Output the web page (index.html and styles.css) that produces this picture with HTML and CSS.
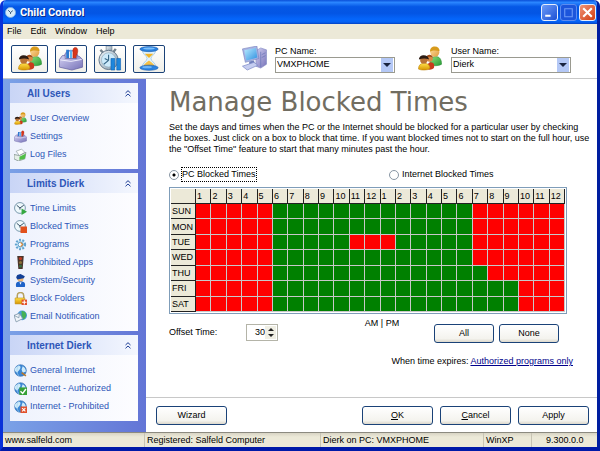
FILE: index.html
```html
<!DOCTYPE html>
<html lang="en">
<head>
    <meta charset="UTF-8">
    <meta name="viewport" content="width=device-width, initial-scale=1.0">
    <title>Child Control</title>
    <link rel="stylesheet" href="styles.css">
</head>
<body>
<!-- shared icons -->
<svg class="defs" aria-hidden="true">
    <defs>
        <linearGradient id="gGreen" x1="0" y1="0" x2="1" y2="1"><stop offset="0" stop-color="#8fe07c"/><stop offset="1" stop-color="#259a35"/></linearGradient>
        <linearGradient id="gYellow" x1="0" y1="0" x2="0" y2="1"><stop offset="0" stop-color="#ffe14a"/><stop offset="1" stop-color="#d79400"/></linearGradient>
        <linearGradient id="gFace" x1="0" y1="0" x2="1" y2="1"><stop offset="0" stop-color="#ffe0a0"/><stop offset="1" stop-color="#e09a3c"/></linearGradient>
        <linearGradient id="gBox" x1="0" y1="0" x2="1" y2="1"><stop offset="0" stop-color="#d3d0f2"/><stop offset="1" stop-color="#7672b8"/></linearGradient>
        <linearGradient id="gBlue" x1="0" y1="0" x2="1" y2="1"><stop offset="0" stop-color="#b9ecff"/><stop offset="1" stop-color="#2e8fe0"/></linearGradient>
        <linearGradient id="gSteel" x1="0" y1="0" x2="1" y2="1"><stop offset="0" stop-color="#f4f8fb"/><stop offset="1" stop-color="#8297a8"/></linearGradient>
    </defs>
    <symbol id="users" viewBox="0 0 26 26">
        <path d="M13 19c0-6 2-8 6-8s6 3 6 8c-3 2-9 2-12 0z" fill="url(#gGreen)" stroke="#268a30" stroke-width=".6"/>
        <circle cx="18" cy="6.500" r="4.700" fill="url(#gFace)"/>
        <path d="M13 6c0-4 2-5.500 5-5.500s5 2 5 5c-3-1-7-1.500-10 .5z" fill="#d89b1c"/>
        <path d="M10 24c0-4 1-7 4-7s4 3 3 6c-2 2-5 2-7 1z" fill="#c83a1c"/>
        <circle cx="12.500" cy="13" r="3.400" fill="#d98a44"/>
        <path d="M9 12c1-4 6-4 7 0-2-1-5-1-7 0z" fill="#a04c18"/>
        <path d="M1 24c0-4 2-6 6-6s6 2 6 5.500c-3 2-9 2-12 .5z" fill="url(#gYellow)" stroke="#b87c00" stroke-width=".5"/>
        <circle cx="6.500" cy="14.500" r="3.800" fill="#b97236"/>
        <path d="M1.500 14c0-6 10-6 10.500 0-3-1.500-7-1.500-10.500 0z" fill="#2c1c14"/>
    </symbol>
    <symbol id="toolbox" viewBox="0 0 26 26">
        <path d="M6 13c0-11 14-11 14 0" fill="none" stroke="#8f8bc6" stroke-width="1.500"/>
        <path d="M8 13V4h3v9z" fill="#2a78d0"/>
        <path d="M12 13V4l2 1v8z" fill="#58b0f0"/>
        <path d="M15 14V6c-1-6 6-6 5 0l-2 8z" fill="#d8361c" stroke="#9c200c" stroke-width=".5"/>
        <path d="M1 14l3-4h3v3h12v-3l3 1 3 3v8l-11 3-13-3z" fill="url(#gBox)" stroke="#6a66a4" stroke-width=".8"/>
        <path d="M2 14.500l11 1.500 11-2" fill="none" stroke="#eeedfc"/>
    </symbol>
    <symbol id="stopwatch" viewBox="0 0 26 26">
        <path d="M9 0h6v5H9z" fill="url(#gSteel)" stroke="#6f7f8c" stroke-width=".7"/>
        <path d="M3 4l3 3M19 3l-3 4" stroke="#75838e" stroke-width="2.500"/>
        <circle cx="11.500" cy="14.500" r="10" fill="url(#gSteel)" stroke="#62778a"/>
        <circle cx="11.500" cy="14.500" r="7.400" fill="#cdeafa" stroke="#8aa7ba" stroke-width=".6"/>
        <path d="M11.500 15V9M11.500 15l-4-2M11.500 15l-5 4" stroke="#386888" stroke-width="1.200"/>
        <path d="M14 13h4v12h-4zM20 13h4v12h-4z" fill="#1d86dc" stroke="#0d5cae" stroke-width=".6"/>
    </symbol>
    <symbol id="hourglass" viewBox="0 0 26 26">
        <path d="M6 4h14c0 5-5 6-5 9s5 4 5 9H6c0-5 5-6 5-9s-5-4-5-9z" fill="#e0f3ff" stroke="#9cc4e4" stroke-width=".8"/>
        <path d="M8.500 8h9L13 12.500z" fill="#f0b428"/>
        <path d="M13 15c4 3 5.500 4 6 7H7c.5-3 2-4 6-7z" fill="#f6c044"/>
        <ellipse cx="13" cy="3.200" rx="9.500" ry="2.700" fill="#2a82e0" stroke="#1458ac" stroke-width=".6"/>
        <ellipse cx="13" cy="2.600" rx="6" ry="1.100" fill="#7cc0fa"/>
        <ellipse cx="13" cy="22.600" rx="9.500" ry="2.700" fill="#2a82e0" stroke="#1458ac" stroke-width=".6"/>
        <ellipse cx="11" cy="22" rx="5" ry="1.100" fill="#6cb4f6"/>
    </symbol>
    <symbol id="computer" viewBox="0 0 26 26">
        <path d="M15 5l5-3 6 2v15l-6 4-5-2z" fill="url(#gBox)" stroke="#7c86c0" stroke-width=".6"/>
        <path d="M20 6v16M21 9l4-2M21 12l4-2" stroke="#6d78b8" stroke-width=".8"/>
        <path d="M1 3l15-3 2 13-14 4z" fill="#a7b3e4" stroke="#6f7cba" stroke-width=".6"/>
        <path d="M3 4.500l12-2.500 1.500 10L5 15z" fill="url(#gBlue)"/>
        <path d="M8 16l5-1 1 4-6 1z" fill="#7080bc"/>
        <path d="M1 21l12-4 4 3-11 5z" fill="#c5cdf0" stroke="#7885c4" stroke-width=".7"/>
    </symbol>
    <symbol id="log" viewBox="0 0 12 12">
        <path d="M2 3l5-2 3 3-5 3z" fill="#fff" stroke="#8a9a9a" stroke-width=".6"/>
        <path d="M0 6l5 1 6-3-1 6-6 2-4-2z" fill="#e6eee8" stroke="#7c8f88" stroke-width=".7"/>
        <path d="M5 8l6-3-1 5-5 1z" fill="#4fbf45"/>
    </symbol>
    <symbol id="clock" viewBox="0 0 12 12">
        <circle cx="5.500" cy="5.500" r="5" fill="#eef8fc" stroke="#7898ac" stroke-width=".9"/>
        <path d="M2.500 3l3 2.500L9 3M5.500 5.500V7" fill="none" stroke="#334c60" stroke-width=".9"/>
    </symbol>
    <symbol id="gear" viewBox="0 0 12 12">
        <circle cx="6" cy="6" r="4.200" fill="#d3edfb" stroke="#62a3cf" stroke-width="2" stroke-dasharray="1.700 1.300"/>
        <circle cx="6" cy="6" r="2.300" fill="#f6fcff" stroke="#3b85ba" stroke-width=".8"/>
        <path d="M6 4l2 2-2 2" fill="none" stroke="#e28b38"/>
    </symbol>
    <symbol id="lights" viewBox="0 0 12 12">
        <path d="M3 0h6l-1 12H4z" fill="#4a352c"/>
        <circle cx="6" cy="2.400" r="1.500" fill="#c03a20"/><circle cx="6" cy="6" r="1.400" fill="#8a7038"/><circle cx="6" cy="9.400" r="1.300" fill="#357040"/>
    </symbol>
    <symbol id="police" viewBox="0 0 12 12">
        <circle cx="6" cy="4.500" r="2.700" fill="#edb472"/>
        <path d="M2 3l1-2 3-1 4 2-1 2-6 1z" fill="#123f96"/>
        <path d="M2 12c-1-4 1-5 4-5s5 1 4 5z" fill="#1f63c8"/>
        <path d="M5 7.500h2L6 10z" fill="#fff"/>
    </symbol>
    <symbol id="lock" viewBox="0 0 12 12">
        <path d="M3 6V3.500c0-4 6-4 6 0V6" fill="none" stroke="#b7a260" stroke-width="1.400"/>
        <path d="M1 5.500h9V11H1z" fill="url(#gYellow)" stroke="#b98a14" stroke-width=".5"/>
        <path d="M7 7h5v5H7z" fill="#e2512c"/><path d="M9.500 7.500v4M7.500 9.500h4" stroke="#fff"/>
    </symbol>
    <symbol id="mail" viewBox="0 0 12 12">
        <circle cx="7.500" cy="5" r="4.500" fill="#4a9bdc"/>
        <path d="M7 1c3 0 5 2 4 5L9 9 7 5z" fill="#45b158"/>
        <path d="M0 5l5-2 3 5-6 3z" fill="#f2f6fa" stroke="#7790a4" stroke-width=".7"/>
        <path d="M0 5l4.500 2.200L5 3" fill="none" stroke="#7790a4" stroke-width=".7"/>
    </symbol>
    <symbol id="globe" viewBox="0 0 12 12">
        <circle cx="6" cy="6" r="5.400" fill="#3b86d4" stroke="#2b65a8" stroke-width=".5"/>
        <path d="M1 4c2-3 5-3 5-1S4 6 3 8C1 7 0 6 1 4zM8 2c2 1 3 3 3 5L8 8 7 5z" fill="#cdeaf9"/>
        <path d="M5 .6c-3 3-3 8 0 10.800" fill="none" stroke="#9fd0f4" stroke-width=".6"/>
    </symbol>
    <symbol id="chevrons" viewBox="0 0 6 7">
        <path d="M.5 3L3 .7 5.500 3M.5 6.300L3 4l2.500 2.300" fill="none" stroke="#1c3c96"/>
    </symbol>
</svg>

<div class="window">
    <header class="titlebar">
        <svg class="logo" viewBox="0 0 12 12"><circle cx="6" cy="6" r="5.500" fill="#d8ecfa" stroke="#7cb0e4"/><path d="M3.500 3.500L6 6l2.500-2M6 6v1.500" fill="none" stroke="#27486c"/></svg>
        <h1>Child Control</h1>
        <button class="winbtn" aria-label="Minimize"><svg viewBox="0 0 14 14"><path d="M3 10h5" stroke="#fff" stroke-width="2"/></svg></button>
        <button class="winbtn dim" aria-label="Maximize"><svg viewBox="0 0 14 14"><path d="M3 3.500h8M3.500 3v8h7V3" fill="none" stroke="#6f9cf6"/></svg></button>
        <button class="winbtn close" aria-label="Close"><svg viewBox="0 0 14 14"><path d="M3 3l8 8M11 3l-8 8" stroke="#fff" stroke-width="2"/></svg></button>
    </header>
    <nav class="menu">
        <a href="#">File</a><a href="#">Edit</a><a href="#">Window</a><a href="#">Help</a>
    </nav>

    <div class="toolbar">
        <div class="tools">
            <button class="tool wide" aria-label="Users"><svg><use href="#users"/></svg></button>
            <button class="tool" aria-label="Settings"><svg><use href="#toolbox"/></svg></button>
            <button class="tool" aria-label="Time"><svg><use href="#stopwatch"/></svg></button>
            <button class="tool" aria-label="Hourglass"><svg><use href="#hourglass"/></svg></button>
        </div>
        <div class="pick">
            <svg><use href="#computer"/></svg>
            <div class="field">
                <label for="pc">PC Name:</label>
                <span class="combo"><select id="pc"><option>VMXPHOME</option></select></span>
            </div>
        </div>
        <div class="pick">
            <svg><use href="#users"/></svg>
            <div class="field">
                <label for="user">User Name:</label>
                <span class="combo"><select id="user"><option>Dierk</option></select></span>
            </div>
        </div>
    </div>

    <div class="main">
        <aside class="sidebar">
            <section class="panel">
                <h2>All Users <svg><use href="#chevrons"/></svg></h2>
                <ul>
                    <li><a href="#"><svg><use href="#users"/></svg>User Overview</a></li>
                    <li><a href="#"><svg><use href="#toolbox"/></svg>Settings</a></li>
                    <li><a href="#"><svg><use href="#log"/></svg>Log Files</a></li>
                </ul>
            </section>
            <section class="panel">
                <h2>Limits Dierk <svg><use href="#chevrons"/></svg></h2>
                <ul>
                    <li><a href="#"><svg viewBox="0 0 12 12"><use href="#clock"/><path d="M7 6l5 3-5 3z" fill="#35a840"/></svg>Time Limits</a></li>
                    <li><a href="#"><svg viewBox="0 0 12 12"><use href="#clock"/><path d="M6 6h6v6H6z" fill="#e2501c"/></svg>Blocked Times</a></li>
                    <li><a href="#"><svg><use href="#gear"/></svg>Programs</a></li>
                    <li><a href="#"><svg><use href="#lights"/></svg>Prohibited Apps</a></li>
                    <li><a href="#"><svg><use href="#police"/></svg>System/Security</a></li>
                    <li><a href="#"><svg><use href="#lock"/></svg>Block Folders</a></li>
                    <li><a href="#"><svg><use href="#mail"/></svg>Email Notification</a></li>
                </ul>
            </section>
            <section class="panel">
                <h2>Internet Dierk <svg><use href="#chevrons"/></svg></h2>
                <ul>
                    <li><a href="#"><svg viewBox="0 0 12 12"><use href="#globe"/><path d="M7 8l4 3" stroke="#b5762c" stroke-width="1.500"/></svg>General Internet</a></li>
                    <li><a href="#"><svg viewBox="0 0 12 12"><use href="#globe"/><path d="M5 5h7v7H5z" fill="#35a037"/><path d="M6 8.500l2 2 3-4" fill="none" stroke="#fff" stroke-width="1.300"/></svg>Internet - Authorized</a></li>
                    <li><a href="#"><svg viewBox="0 0 12 12"><use href="#globe"/><path d="M6 6h6v6H6z" fill="#e2512c"/><path d="M7.500 7.500l3 3M10.500 7.500l-3 3" stroke="#fff"/></svg>Internet - Prohibited</a></li>
                </ul>
            </section>
        </aside>

        <main class="content">
            <div class="page">
                <h2>Manage Blocked Times</h2>
                <p>Set the days and times when the PC or the Internet should be blocked for a particular user by checking<br>
                the boxes. Just click on a box to block that time. If you want blocked times not to start on the full hour, use<br>
                the "Offset Time" feature to start that many minutes past the hour.</p>

                <div class="modes">
                    <div><input type="radio" name="mode" id="modePc" checked><label for="modePc">PC Blocked Times</label></div>
                    <div><input type="radio" name="mode" id="modeNet"><label for="modeNet">Internet Blocked Times</label></div>
                </div>

                <table id="grid">
                    <thead></thead>
                    <tbody></tbody>
                </table>

                <div class="under">
                    <div class="offset">
                        <label for="offset">Offset Time:</label>
                        <span class="spin">
                            <input type="text" id="offset" value="30">
                            <span class="arrows">
                                <button id="up" aria-label="More"></button>
                                <button id="down" aria-label="Less"></button>
                            </span>
                        </span>
                    </div>
                    <span class="ampm">AM | PM</span>
                    <div class="picks">
                        <button class="btn" id="allBtn">All</button>
                        <button class="btn" id="noneBtn">None</button>
                    </div>
                </div>
                <div class="expires">When time expires: <a href="#">Authorized programs only</a></div>
            </div>
            <div class="actions">
                <button class="btn wizard">Wizard</button>
                <button class="btn"><u>O</u>K</button>
                <button class="btn"><u>C</u>ancel</button>
                <button class="btn">Apply</button>
            </div>
        </main>
    </div>

    <footer class="status">
        <span>www.salfeld.com</span>
        <span>Registered: Salfeld Computer</span>
        <span>Dierk on PC: VMXPHOME</span>
        <span>WinXP</span>
        <span>9.300.0.0</span>
    </footer>
</div>

<script>
    // 1 = blocked, one character per hour
    const days = {
        SUN: "111110000000000000111111",
        MON: "111110000000000000111111",
        TUE: "111110000011100000111111",
        WED: "111110000000000000111111",
        THU: "111110000000000000011111",
        FRI: "111110000000000000000111",
        SAT: "111110000000000000000111"
    };
    const grid = document.querySelector("#grid");
    let head = "<tr><th></th>";
    for(let h=0; h<24; h++) {
        head += "<th>" + (h % 12 + 1) + "</th>";
    }
    grid.tHead.innerHTML = head + "</tr>";

    for(const day in days) {
        const tr = grid.tBodies[0].insertRow();
        tr.innerHTML = "<th>" + day + "</th>";
        for(let h=0; h<24; h++) {
            const box = document.createElement("input");
            box.type = "checkbox";
            box.checked = days[day][h] === "1";
            box.setAttribute("aria-label", day + " " + (h % 12 + 1) + (h < 12 ? " AM" : " PM"));
            tr.insertCell().appendChild(box);
        }
    }

    function setAll(value) {
        grid.querySelectorAll("input").forEach(function(box) {
            box.checked = value;
        });
    }
    document.querySelector("#allBtn").addEventListener("click", () => setAll(true));
    document.querySelector("#noneBtn").addEventListener("click", () => setAll(false));

    const offset = document.querySelector("#offset");
    function step(n) {
        offset.value = Math.min(59, Math.max(0, Number(offset.value) + n));
    }
    document.querySelector("#up").addEventListener("click", () => step(1));
    document.querySelector("#down").addEventListener("click", () => step(-1));
</script>
</body>
</html>
```
FILE: styles.css
```css
* {
    box-sizing: border-box;
}
body {
    margin: 0;
    background: #fff;
    font: 9px/11px "Liberation Sans", Arial, sans-serif;
    color: #000;
}
button, input, select {
    font: inherit;
    color: inherit;
    margin: 0;
    padding: 0;
}
h1, h2, p, ul {
    margin: 0;
    padding: 0;
}
a {
    color: inherit;
    text-decoration: none;
}
.defs {
    position: absolute;
    width: 0;
    height: 0;
}
.window {
    display: flex;
    flex-direction: column;
    min-height: 100vh;
    border: solid #0831d9;
    border-width: 0 3px 4px;
    border-right-color: #001ea0;
    border-bottom-color: #0019a8;
    border-radius: 6px 6px 0 0;
    overflow: hidden;
}

/* title bar and menu */
.titlebar {
    display: flex;
    align-items: center;
    gap: 2px;
    height: 24px;
    margin: 0 -3px;
    padding: 1px 4px 0 5px;
    background: linear-gradient(#0a4fd8, #2a86ff 10%, #0558e6 28%, #0355e4 55%, #0566fb 80%, #0562f4 92%, #0340c0);
}
.logo {
    width: 11px;
    height: 11px;
}
.titlebar h1 {
    flex: 1;
    padding-left: 2px;
    font: bold 11px/14px Roboto, "Noto Sans", sans-serif;
    color: #fff;
    text-shadow: 1px 1px #0a2c8c;
}
.winbtn {
    width: 17px;
    height: 17px;
    border: 1px solid #e6eefc;
    border-radius: 3px;
    background: linear-gradient(135deg, #6c9bf8, #1c50d4);
}
.winbtn svg {
    display: block;
    width: 15px;
    height: 15px;
}
.winbtn.dim {
    border-color: #5c8cf0;
    background: #1c55dc;
}
.winbtn.close {
    background: linear-gradient(135deg, #f09478, #d03c10);
}
.menu {
    display: flex;
    gap: 9px;
    height: 15px;
    padding-left: 4px;
    line-height: 15px;
    background: #ece9d8;
}

/* toolbar */
.toolbar {
    display: flex;
    align-items: center;
    height: 40px;
    padding: 0 26px 0 8px;
    border-bottom: 1px solid #c8c8c8;
}
.tools {
    display: flex;
    flex: 1;
    gap: 7px;
}
.tool {
    display: flex;
    align-items: center;
    justify-content: center;
    width: 32px;
    height: 28px;
    border: 1px solid #1a4278;
    border-radius: 2px;
    background: linear-gradient(#fff, #f0efe8);
}
.tool.wide {
    width: 37px;
}
.tool svg, .pick > svg {
    width: 26px;
    height: 25px;
}
.pick {
    display: flex;
    align-items: center;
    gap: 8px;
}
.pick + .pick {
    margin-left: 22px;
}
.field label {
    display: block;
    line-height: 12px;
}
.combo {
    position: relative;
    display: block;
    width: 120px;
    height: 16px;
}
.combo select {
    width: 100%;
    height: 100%;
    padding-left: 1px;
    border: 1px solid #9a9a90;
    border-radius: 0;
    background: linear-gradient(to left, #fff 1px, #b4c8f6 1px, #b4c8f6 13px, #fff 13px);
    appearance: none;
}
.combo::after {
    content: "";
    position: absolute;
    top: 6px;
    right: 4px;
    border: 4px solid transparent;
    border-top-color: #1a2440;
    pointer-events: none;
}

/* sidebar */
.main {
    display: flex;
    flex: 1;
}
.sidebar {
    display: flex;
    flex: none;
    flex-direction: column;
    gap: 4px;
    width: 143px;
    padding: 4px 8px 11px 7px;
    background: linear-gradient(to right, #7ba2e7, #6375d6);
}
.panel {
    padding-bottom: 6px;
    background: linear-gradient(to right, #eef2fd, #fdfdff);
    color: #2d56b8;
}
.panel h2 {
    display: flex;
    align-items: center;
    justify-content: space-between;
    height: 20px;
    margin-bottom: 6px;
    padding: 0 7px 0 17px;
    background: linear-gradient(to right, #c9d5f6, #f4f7fe);
    font-size: 10px;
}
.panel h2 svg {
    width: 6px;
    height: 7px;
}
.panel ul {
    list-style: none;
}
.panel a {
    display: flex;
    align-items: center;
    gap: 3px;
    height: 18px;
    padding-left: 4px;
}
.panel a svg {
    width: 13px;
    height: 13px;
}

/* content */
.content {
    display: flex;
    flex: 1;
    flex-direction: column;
    min-width: 0;
    background: #fff;
}
.page {
    flex: 1;
    padding: 7px 30px 0 23px;
}
.page h2 {
    margin-bottom: 4px;
    font: 26px/32px "DejaVu Sans", Verdana, sans-serif;
    color: #716d61;
}
.page p {
    margin-bottom: 12px;
    white-space: nowrap;
}
.modes {
    display: grid;
    grid-template-columns: 220px 1fr;
    align-items: center;
    height: 14px;
    margin-bottom: 6px;
}
.modes div {
    display: flex;
    align-items: center;
    gap: 2px;
}
.modes input {
    width: 10px;
    height: 10px;
    border: 1px solid #8896a4;
    border-radius: 50%;
    appearance: none;
}
.modes input:checked {
    background: radial-gradient(#000 0 1px, #fff 2px);
}
.modes label {
    padding: 1px 0;
    border: 1px dotted transparent;
}
.modes input:checked + label {
    border-color: #000;
}
#grid {
    width: 100%;
    height: 127px;
    border: 1px solid #7f9db9;
    padding: 1px;
    border-spacing: 0;
    table-layout: fixed;
}
#grid th {
    padding: 0 0 0 1px;
    border: 1px solid #222;
    border-width: 0 1px 1px 0;
    background: #ece9d8;
    font-weight: normal;
    text-align: left;
    line-height: 14px;
}
#grid thead th {
    height: 15px;
}
#grid th:first-child {
    width: 25px;
}
#grid td {
    height: 15px;
    padding: 0;
    border: 1px solid #c8c8c8;
    border-width: 0 1px 1px 0;
}
#grid td input {
    display: block;
    width: 100%;
    height: 100%;
    min-height: 14px;
    background: #008000;
    appearance: none;
}
#grid td input:checked {
    background: #f00;
}
.under {
    display: grid;
    grid-template-columns: 1fr auto 1fr;
    align-items: start;
    margin-top: 4px;
}
.offset {
    display: flex;
    align-items: center;
    margin-top: 6px;
}
.offset label {
    width: 77px;
}
.spin {
    display: flex;
    width: 32px;
    height: 17px;
    padding: 1px;
    border: 1px solid #b4b4a8;
}
.spin input {
    width: 17px;
    border: 0;
    text-align: right;
}
.arrows {
    display: flex;
    flex: 1;
    flex-direction: column;
    align-items: center;
    justify-content: space-around;
    background: #f0efe4;
}
.arrows button {
    width: 0;
    height: 0;
    border: 3px solid transparent;
    background: none;
}
#up {
    border-top: 0;
    border-bottom-color: #222;
}
#down {
    border-bottom: 0;
    border-top-color: #222;
}
.ampm {
    margin-left: 28px;
}
.picks {
    display: flex;
    justify-content: flex-end;
    gap: 5px;
    margin: 6px 8px 0 0;
}
.btn {
    width: 71px;
    height: 19px;
    border: 1px solid #1a4278;
    border-radius: 3px;
    background: linear-gradient(#fff, #f4f3ee 80%, #dcd8cc);
}
.picks .btn {
    width: 60px;
}
.expires {
    margin: 13px -6px 0 0;
    text-align: right;
}
.expires a {
    color: #00008b;
    text-decoration: underline;
}
.actions {
    display: flex;
    gap: 7px;
    padding: 8px 8px 7px 10px;
    border-top: 1px solid #c8c8c8;
}
.wizard {
    margin-right: auto;
}

/* status bar */
.status {
    display: grid;
    grid-template-columns: 142px 176px 163px 48px 1fr;
    height: 15px;
    border-top: 1px solid #8c8a80;
    background: linear-gradient(#d8d4c4, #ece9d8 4px);
    line-height: 14px;
}
.status span {
    padding-left: 2px;
    border-right: 1px solid #c8c4b4;
    white-space: nowrap;
}
.status span:last-child {
    padding-left: 14px;
    border: 0;
}
```
